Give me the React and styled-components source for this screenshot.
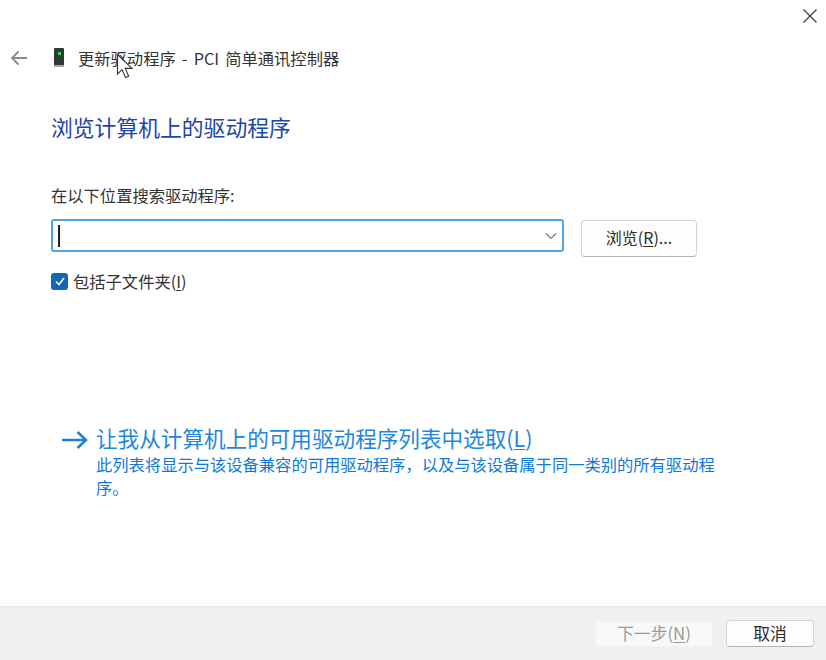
import React from "react";
import styled, { createGlobalStyle } from "styled-components";

const GlobalStyle = createGlobalStyle`
    html, body {
        margin: 0;
        padding: 0;
        background: #ffffff;
    }
    body {
        font-family: "Noto Sans CJK SC", "Noto Sans", sans-serif;
    }
`

const Window = styled.div`
    position: relative;
    display: flex;
    flex-direction: column;
    width: 826px;
    height: 660px;
    overflow: hidden;
    background: #ffffff;
`

const TitleBar = styled.div`
    display: flex;
    justify-content: flex-end;
    height: 32px;
    padding: 8px 8px 0 0;
    box-sizing: border-box;
`

const CloseButton = styled.div`
    display: flex;
    width: 16px;
    height: 16px;
    color: #3c3c3c;
`

const Header = styled.div`
    display: flex;
    align-items: center;
    height: 28px;
    margin-top: 12px;
    padding-left: 10px;
`

const BackArrow = styled.div`
    display: flex;
    width: 18px;
    height: 18px;
    margin-right: 24px;
    color: #8a8a8a;
`

const DeviceIcon = styled.div`
    display: flex;
    width: 16px;
    height: 22px;
    margin-right: 10px;
`

const HeaderTitle = styled.span`
    font-size: 16.3px;
    line-height: 20px;
    word-spacing: 2.5px;
    color: #333333;
    white-space: nowrap;
`

const Cursor = styled.div`
    position: absolute;
    left: 116px;
    top: 53px;
    width: 20px;
    height: 28px;
`

const Content = styled.div`
    display: flex;
    flex: 1;
    flex-direction: column;
    padding: 0 0 0 51px;
`

const Heading = styled.h1`
    margin: 41px 0 0;
    font-size: 21.8px;
    font-weight: 400;
    line-height: 28px;
    color: #1c46a8;
`

const FieldLabel = styled.div`
    margin-top: 44px;
    font-size: 16.3px;
    line-height: 20px;
    color: #333333;
`

const SearchRow = styled.div`
    display: flex;
    align-items: flex-start;
    gap: 17px;
    margin-top: 14px;
`

const ComboBox = styled.div`
    display: flex;
    align-items: center;
    justify-content: space-between;
    width: 513px;
    height: 33px;
    box-sizing: border-box;
    padding: 0 5px 0 5px;
    border: 2px solid #4fa3e6;
    border-radius: 3px;
`

const Caret = styled.span`
    width: 1.5px;
    height: 22px;
    background: #222222;
`

const Chevron = styled.div`
    display: flex;
    width: 12px;
    height: 12px;
    color: #7a7a7a;
`

const Button = styled.div`
    display: flex;
    align-items: center;
    justify-content: center;
    width: ${({ $width }) => $width}px;
    height: ${({ $height }) => $height}px;
    margin-top: ${({ $top }) => $top || 0}px;
    padding-bottom: ${({ $lift }) => $lift || 0}px;
    box-sizing: border-box;
    border: 1px solid ${({ $disabled }) => ($disabled ? "#f2f2f2" : "#d4d4d4")};
    border-bottom-color: ${({ $disabled }) => ($disabled ? "#f2f2f2" : "#b4b4b4")};
    border-radius: 4px;
    background: ${({ $disabled }) => ($disabled ? "#f8f8f8" : "#fdfdfd")};
    color: ${({ $disabled }) => ($disabled ? "#9a9a9a" : "#2a2a2a")};
    font-size: ${({ $size }) => $size || 16}px;
    white-space: pre;
`

const Underlined = styled.span`
    text-decoration: underline;
    text-underline-offset: 2px;
    text-decoration-thickness: 1px;
`

const CheckRow = styled.div`
    display: flex;
    align-items: center;
    gap: 5px;
    margin-top: 14px;
    font-size: 16.3px;
    line-height: 20px;
    color: #333333;
`

const CheckBox = styled.div`
    display: flex;
    align-items: center;
    justify-content: center;
    width: 17px;
    height: 17px;
    border-radius: 3px;
    background: #1565b8;
    color: #ffffff;
`

const LinkBlock = styled.div`
    display: flex;
    gap: 8px;
    margin-top: 133px;
    margin-left: 11px;
`

const LinkArrow = styled.div`
    display: flex;
    flex: none;
    width: 26px;
    height: 26px;
    margin-top: 3px;
    color: #1a7fd6;
`

const LinkText = styled.div`
    width: 625px;
`

const LinkTitle = styled.div`
    font-size: 21.6px;
    line-height: 28px;
    color: #1f86dc;
    white-space: nowrap;
`

const LinkDescription = styled.div`
    font-size: 16.3px;
    line-height: 23px;
    margin-top: 1px;
    color: #0f78d8;
`

const Footer = styled.div`
    display: flex;
    justify-content: flex-end;
    align-items: center;
    gap: 13px;
    height: 54px;
    padding: 0 12px 0 0;
    box-sizing: border-box;
    background: #f0f0f0;
    border-top: 1px solid #e6e6e6;
`

const App = () => {
    return (
        <Window>
            <GlobalStyle />
            <TitleBar>
                <CloseButton>
                    <svg width="16" height="16" viewBox="0 0 16 16" fill="none" stroke="currentColor" strokeWidth="1.3">
                        <path d="M1.5 1.5 14.5 14.5M14.5 1.5 1.5 14.5" />
                    </svg>
                </CloseButton>
            </TitleBar>
            <Header>
                <BackArrow>
                    <svg width="18" height="18" viewBox="0 0 18 18" fill="none" stroke="currentColor" strokeWidth="1.8">
                        <path d="M17 9H2M8.5 2.5 2 9l6.5 6.5" />
                    </svg>
                </BackArrow>
                <DeviceIcon>
                    <svg width="16" height="22" viewBox="0 0 16 22">
                        <rect x="2" y="1" width="10" height="18" rx="1" fill="#2d3a3a" />
                        <rect x="2" y="18" width="10" height="2" fill="#a0a8a8" />
                        <rect x="6" y="5" width="3" height="3" fill="#2fe04f" />
                    </svg>
                </DeviceIcon>
                <HeaderTitle>更新驱动程序 - PCI 简单通讯控制器</HeaderTitle>
            </Header>
            <Cursor>
                <svg width="20" height="28" viewBox="0 0 20 28">
                    <path d="M1.5 1.5V21l4.6-4.4 3.4 8 3.2-1.4-3.4-7.8H16Z" fill="#ffffff" stroke="#333333" strokeWidth="1.1" />
                </svg>
            </Cursor>
            <Content>
                <Heading>浏览计算机上的驱动程序</Heading>
                <FieldLabel>在以下位置搜索驱动程序:</FieldLabel>
                <SearchRow>
                    <ComboBox>
                        <Caret />
                        <Chevron>
                            <svg width="12" height="12" viewBox="0 0 12 12" fill="none" stroke="currentColor" strokeWidth="1.2">
                                <path d="M1 3.5 6 8.5 11 3.5" />
                            </svg>
                        </Chevron>
                    </ComboBox>
                    <Button $width={116} $height={37} $top={1} $lift={4}><span>浏览(<Underlined>R</Underlined>)...</span></Button>
                </SearchRow>
                <CheckRow>
                    <CheckBox>
                        <svg width="12" height="12" viewBox="0 0 12 12" fill="none" stroke="currentColor" strokeWidth="1.5">
                            <path d="M2 6.5 5 9.5 10 3" />
                        </svg>
                    </CheckBox>
                    <span>包括子文件夹(<Underlined>I</Underlined>)</span>
                </CheckRow>
                <LinkBlock>
                    <LinkArrow>
                        <svg width="26" height="26" viewBox="0 0 26 26" fill="none" stroke="currentColor" strokeWidth="2.5">
                            <path d="M0 13H24M15.5 5 24 13l-8.5 8" />
                        </svg>
                    </LinkArrow>
                    <LinkText>
                        <LinkTitle>让我从计算机上的可用驱动程序列表中选取(<Underlined>L</Underlined>)</LinkTitle>
                        <LinkDescription>此列表将显示与该设备兼容的可用驱动程序，以及与该设备属于同一类别的所有驱动程序。</LinkDescription>
                    </LinkText>
                </LinkBlock>
            </Content>
            <Footer>
                <Button $width={118} $height={26} $size={16.8} $lift={2} $disabled><span>下一步(<Underlined>N</Underlined>)</span></Button>
                <Button $width={88} $height={27} $size={16.8} $lift={2}>取消</Button>
            </Footer>
        </Window>
    );
};

export default App;
